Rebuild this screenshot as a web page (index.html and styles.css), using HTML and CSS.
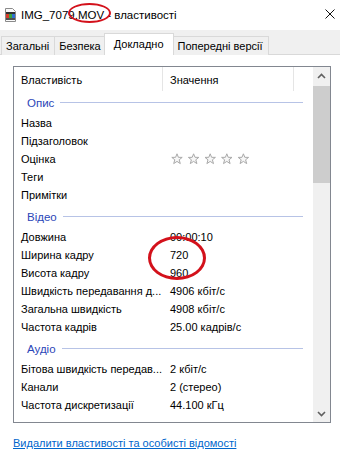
FILE: index.html
```html
<!DOCTYPE html>
<html lang="uk">
<head>
  <meta charset="UTF-8">
  <meta name="viewport" content="width=device-width, initial-scale=1.0" />
  <title>IMG_7079.MOV - властивості</title>
  <link rel="stylesheet" href="styles.css">
</head>
<body>

  <div class="vikno">
    <header class="zagolovok">
      <svg class="ikonka" width="13" height="14" viewBox="0 0 13 14">
        <path d="M1.5 0.5h7l3 3v10h-10z" fill="#fafafa" stroke="#8a8a8a"/>
        <rect x="2" y="4" width="9" height="2" fill="#303030"/>
        <rect x="2" y="6" width="3" height="4" fill="#d83b2b"/>
        <rect x="5" y="6" width="3" height="4" fill="#3aa53a"/>
        <rect x="8" y="6" width="3" height="4" fill="#2f6fd0"/>
        <rect x="2" y="10" width="9" height="2" fill="#505050"/>
      </svg>
      <span class="nazva-vikna">IMG_7079.MOV - властивості</span>
      <svg class="zakryty" width="10" height="10" viewBox="0 0 10 10">
        <path d="M0.5 0.5l9 9M9.5 0.5l-9 9" stroke="#111" stroke-width="1"/>
      </svg>
    </header>

    <nav class="vkladky">
      <div class="vkladka">Загальні</div>
      <div class="vkladka">Безпека</div>
      <div class="vkladka aktyvna">Докладно</div>
      <div class="vkladka">Попередні версії</div>
    </nav>

    <main class="storinka">
      <div class="spysok">
        <div class="spysok-vmist">
          <div class="shapka">
            <div class="kol-nazva">Властивість</div>
            <div class="kol-znach">Значення</div>
          </div>

          <div class="grupa persha"><span>Опис</span></div>
          <div class="riadok"><span class="nazva">Назва</span><span class="znach"></span></div>
          <div class="riadok"><span class="nazva">Підзаголовок</span><span class="znach"></span></div>
          <div class="riadok">
            <span class="nazva">Оцінка</span>
            <span class="znach zirky">
              <svg width="82" height="12" viewBox="0 0 82 12">
                <g fill="#f7f7f7" stroke="#a9a9a9" stroke-width="1">
                  <polygon points="6,0.8 7.4,4.3 11.2,4.4 8.2,6.8 9.3,10.6 6,8.4 2.7,10.6 3.8,6.8 0.8,4.4 4.6,4.3"/>
                  <polygon transform="translate(16.6 0)" points="6,0.8 7.4,4.3 11.2,4.4 8.2,6.8 9.3,10.6 6,8.4 2.7,10.6 3.8,6.8 0.8,4.4 4.6,4.3"/>
                  <polygon transform="translate(33.2 0)" points="6,0.8 7.4,4.3 11.2,4.4 8.2,6.8 9.3,10.6 6,8.4 2.7,10.6 3.8,6.8 0.8,4.4 4.6,4.3"/>
                  <polygon transform="translate(49.8 0)" points="6,0.8 7.4,4.3 11.2,4.4 8.2,6.8 9.3,10.6 6,8.4 2.7,10.6 3.8,6.8 0.8,4.4 4.6,4.3"/>
                  <polygon transform="translate(66.4 0)" points="6,0.8 7.4,4.3 11.2,4.4 8.2,6.8 9.3,10.6 6,8.4 2.7,10.6 3.8,6.8 0.8,4.4 4.6,4.3"/>
                </g>
              </svg>
            </span>
          </div>
          <div class="riadok"><span class="nazva">Теги</span><span class="znach"></span></div>
          <div class="riadok"><span class="nazva">Примітки</span><span class="znach"></span></div>

          <div class="grupa"><span>Відео</span></div>
          <div class="riadok"><span class="nazva">Довжина</span><span class="znach">00:00:10</span></div>
          <div class="riadok"><span class="nazva">Ширина кадру</span><span class="znach">720</span></div>
          <div class="riadok"><span class="nazva">Висота кадру</span><span class="znach">960</span></div>
          <div class="riadok"><span class="nazva">Швидкість передавання д...</span><span class="znach">4906 кбіт/с</span></div>
          <div class="riadok"><span class="nazva">Загальна швидкість</span><span class="znach">4908 кбіт/с</span></div>
          <div class="riadok"><span class="nazva">Частота кадрів</span><span class="znach">25.00 кадрів/с</span></div>

          <div class="grupa"><span>Аудіо</span></div>
          <div class="riadok"><span class="nazva">Бітова швидкість передав...</span><span class="znach">2 кбіт/с</span></div>
          <div class="riadok"><span class="nazva">Канали</span><span class="znach">2 (стерео)</span></div>
          <div class="riadok"><span class="nazva">Частота дискретизації</span><span class="znach">44.100 кГц</span></div>

          <div class="grupa"><span>Мультимедіа</span></div>
        </div>

        <div class="smuga">
          <div class="strilka">
            <svg width="9" height="6" viewBox="0 0 9 6"><path d="M1 5l3.5-3.5L8 5" fill="none" stroke="#606060" stroke-width="1.6"/></svg>
          </div>
          <div class="povzunok"></div>
          <div class="dorizhka"></div>
          <div class="strilka">
            <svg width="9" height="6" viewBox="0 0 9 6"><path d="M1 1l3.5 3.5L8 1" fill="none" stroke="#606060" stroke-width="1.6"/></svg>
          </div>
        </div>
      </div>

      <a class="posylannia" href="#">Видалити властивості та особисті відомості</a>
    </main>

    <span class="kolo kolo-mov"></span>
    <span class="kolo kolo-rozmir"></span>
  </div>

</body>
</html>
```

FILE: styles.css
```css
:root {
  --kolir-ramky: #828790;
  --kolir-vkladky: #d9d9d9;
  --kolir-tla: #f0f0f0;
  --kolir-grupy: #2b46b8;
  --kolir-linii: #b7c3e6;
  --kolir-posylannia: #0066cc;
  --kolir-kola: #d3111b;

  --shryft: "Liberation Sans", Arial, sans-serif;
}

* {
  margin: 0;
  padding: 0;
  box-sizing: border-box;
}

body {
  font-family: var(--shryft);
  font-size: 11px;
  color: #000;
  background-color: white;
}

.vikno {
  position: relative;
  width: 340px;
  height: 464px;
  overflow: hidden;
}

/* заголовок вікна */
.zagolovok {
  height: 30px;
  display: flex;
  align-items: center;
  padding-left: 4px;
  background-color: white;
}

.ikonka {
  margin-top: -1px;
}

.nazva-vikna {
  margin-left: 4px;
  font-size: 11.5px;
  flex: 1;
}

.zakryty {
  margin-right: 5px;
  margin-top: -3px;
}

/* вкладки */
.vkladky {
  height: 25px;
  display: flex;
  align-items: flex-end;
  padding-left: 1px;
  background-color: var(--kolir-tla);
  border-bottom: 1px solid var(--kolir-vkladky);
}

.vkladka {
  height: 19px;
  line-height: 18px;
  padding: 0 5px 0 4px;
  margin-bottom: -1px;
  border: 1px solid var(--kolir-vkladky);
  border-bottom: none;
  margin-right: -1px;
  background-color: var(--kolir-tla);
}

.vkladka.aktyvna {
  height: 22px;
  line-height: 20px;
  margin: 0 -1px -1px -2px;
  padding: 0 9px;
  background-color: white;
  position: relative;
  z-index: 1;
}

/* сторінка */
.storinka {
  padding: 11px 9px 0 13px;
}

.spysok {
  height: 357px;
  border: 1px solid var(--kolir-ramky);
  display: flex;
  overflow: hidden;
}

.spysok-vmist {
  flex: 1;
  overflow: hidden;
}

.shapka {
  height: 24px;
  display: flex;
}

.shapka div {
  line-height: 24px;
  padding: 1px 0 0 7px;
}

.kol-nazva {
  width: 149px;
  border-right: 1px solid #e5e5e5;
}

.kol-znach {
  width: 131px;
  border-right: 1px solid #e5e5e5;
}

.grupa {
  height: 24px;
  padding-top: 3px;
  padding-left: 13px;
  padding-right: 10px;
  display: flex;
  align-items: center;
  gap: 6px;
  font-size: 11.5px;
  color: var(--kolir-grupy);
}

.grupa.persha {
  height: 22px;
  padding-top: 1px;
}

.grupa::after {
  content: "";
  flex: 1;
  height: 1px;
  background-color: var(--kolir-linii);
}

.riadok {
  height: 18px;
  padding-top: 1px;
  display: flex;
  align-items: center;
}

.nazva {
  flex: none;
  width: 149px;
  padding: 0 2px 0 7px;
  white-space: nowrap;
  overflow: hidden;
}

.znach {
  padding-left: 7px;
  white-space: nowrap;
}

.zirky svg {
  display: block;
  margin-left: 1px;
}

/* смуга прокрутки */
.smuga {
  width: 17px;
  background-color: var(--kolir-tla);
  display: flex;
  flex-direction: column;
}

.strilka {
  height: 17px;
  display: flex;
  align-items: center;
  justify-content: center;
}

.povzunok {
  height: 97px;
  margin-top: 2px;
  background-color: #cdcdcd;
}

.dorizhka {
  flex: 1;
}

.posylannia {
  display: inline-block;
  margin-top: 14px;
  color: var(--kolir-posylannia);
  text-decoration: underline;
}

/* червоні позначки поверх знімка */
.kolo {
  position: absolute;
  border: 2px solid var(--kolir-kola);
  border-radius: 50%;
}

.kolo-mov {
  left: 68px;
  top: 3px;
  width: 43px;
  height: 20px;
}

.kolo-rozmir {
  left: 148px;
  top: 236px;
  width: 58px;
  height: 44px;
  border-width: 3px;
}
```
